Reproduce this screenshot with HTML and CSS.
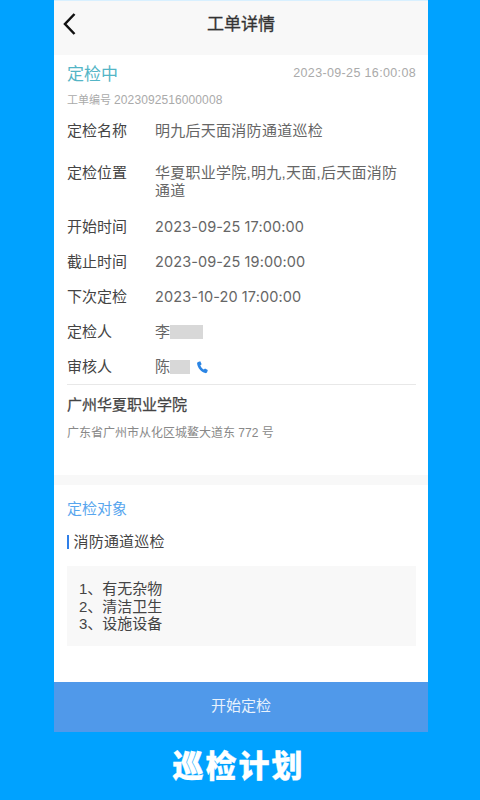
FILE: index.html
```html
<!DOCTYPE html>
<html lang="zh">
<head>
<meta charset="utf-8">
<title>工单详情</title>
<link rel="stylesheet" href="styles.css">
</head>
<body>
<div class="frame">
  <main class="phone">
    <header class="nav">
      <svg class="back" viewBox="0 0 14 22" width="14" height="22"><path d="M11.500 1 2 11l9.500 10" fill="none" stroke="#111" stroke-width="2.500"/></svg>
      <h1 class="nav-title">工单详情</h1>
    </header>
    <section class="detail">
      <div class="status-row"><span class="status">定检中</span><span class="stamp">2023-09-25 16:00:08</span></div>
      <div class="order-no">工单编号 <span class="order-digits">2023092516000008</span></div>
      <div class="rows">
        <div class="row r1"><span class="label">定检名称</span><span class="value">明九后天面消防通道巡检</span></div>
        <div class="row r2"><span class="label">定检位置</span><span class="value wrap">华夏职业学院,明九,天面,后天面消防通道</span></div>
        <div class="row r3"><span class="label">开始时间</span><span class="value date">2023-09-25 17:00:00</span></div>
        <div class="row r3"><span class="label">截止时间</span><span class="value date">2023-09-25 19:00:00</span></div>
        <div class="row r3"><span class="label">下次定检</span><span class="value date">2023-10-20 17:00:00</span></div>
        <div class="row r3"><span class="label">定检人</span><span class="value person">李<i class="mask mask-a"></i></span></div>
        <div class="row r3"><span class="label">审核人</span><span class="value person">陈<i class="mask mask-b"></i>
          <svg class="phone-icon" viewBox="0 0 14 14" width="13" height="13"><path d="M2.200 1 4.600.4l1.500 3-1.400 1.200c.5 1.900 1.900 3.700 3.700 4.600l1.300-1.100 3 1.700-.7 2.400c-.3.800-1.200 1-2 .8C5.400 11.800 1.800 7.600 1.200 3c-.1-.9.300-1.700 1-2Z" fill="#2b85e4"/></svg></span></div>
      </div>
      <div class="place">
        <div class="place-name">广州华夏职业学院</div>
        <div class="place-addr">广东省广州市从化区城鳌大道东 772 号</div>
      </div>
    </section>
    <section class="objects">
      <h2 class="obj-title">定检对象</h2>
      <h3 class="obj-name">消防通道巡检</h3>
      <div class="check-list">
        <div>1、有无杂物</div>
        <div>2、清洁卫生</div>
        <div>3、设施设备</div>
      </div>
    </section>
    <button class="start" type="button">开始定检</button>
  </main>
  <div class="caption">巡检计划</div>
</div>
</body>
</html>
```

FILE: styles.css
```css
* { box-sizing: border-box; }
html, body { margin: 0; padding: 0; }
body {
  width: 480px;
  height: 800px;
  overflow: hidden;
  background: #00a2ff;
  font-family: "Liberation Sans", "Noto Sans CJK SC", sans-serif;
}
.frame { display: flex; flex-direction: column; align-items: center; height: 800px; padding-left: 2px; }
.phone {
  width: 374px;
  height: 732px;
  background: #fff;
  display: flex;
  flex-direction: column;
}
.nav {
  height: 55px;
  flex: none;
  background: #f8f8f8;
  display: flex;
  align-items: center;
  justify-content: center;
  position: relative;
  border-top: 1px solid #d8f0ff;
  padding-bottom: 11px;
}
.back { position: absolute; left: 9px; top: 12px; }
.nav-title { margin: 0; font-family: "Noto Sans CJK SC", sans-serif; font-size: 17px; font-weight: 400; color: #333; line-height: 22px; -webkit-text-stroke: .3px #333; }
.detail { height: 420px; flex: none; padding: 0 12px 0 13px; }
.status-row { display: flex; justify-content: space-between; align-items: center; padding-top: 5px; height: 30px; }
.status { font-size: 17px; color: #54b5c6; line-height: 24px; margin-top: 4px; }
.stamp { font-size: 12.500px; color: #aaa; letter-spacing: .35px; }
.order-no { font-size: 11px; color: #aaa; line-height: 16px; margin-top: 7px; }
.order-digits { font-size: 12px; letter-spacing: .1px; }
.rows { margin-top: 13px; border-bottom: 1px solid #e8e8e8; height: 264px; }
.row { display: flex; font-size: 15px; line-height: 20px; }
.label { width: 88px; flex: none; color: #444; }
.value { color: #666; flex: 1; letter-spacing: .27px; }
.date { font-family: Inter, "Liberation Sans", sans-serif; font-size: 14.500px; letter-spacing: .1px; }
.wrap { line-height: 18px; margin-top: 1px; padding-right: 12px; }
.r1 { height: 41px; }
.r2 { height: 55px; padding-top: 1px; }
.r3 { height: 35px; }
.person { display: flex; align-items: center; height: 20px; }
.mask { display: block; background: #d8d8d8; height: 14px; }
.mask-a { width: 33px; }
.mask-b { width: 20px; }
.phone-icon { margin-left: 6px; }
.place { padding-top: 8px; }
.place-name { font-family: "Noto Sans CJK SC", sans-serif; font-size: 15px; line-height: 22px; color: #444; font-weight: 400; -webkit-text-stroke: .25px #444; }
.place-addr { font-size: 12px; line-height: 16px; margin-top: 10px; color: #888; }
.objects {
  flex: 1;
  border-top: 10px solid #f8f8f8;
  padding: 14px 12px 0 13px;
}
.obj-title { margin: 0; font-size: 15px; font-weight: 400; line-height: 20px; color: #58a6ee; }
.obj-name {
  margin: 16px 0 0;
  font-size: 15px;
  font-weight: 400;
  line-height: 20px;
  color: #444;
  padding-left: 4.500px;
  border-left: 2.500px solid #2f7fe8;
  height: 14px;
  display: flex;
  align-items: center;
  letter-spacing: .2px;
}
.check-list {
  margin: 17px 0 0;
  height: 80px;
  background: #f8f8f8;
  padding: 14px 12px;
  font-size: 15px;
  line-height: 17.500px;
  color: #444;
}
.start {
  flex: none;
  height: 50px;
  border: 0;
  padding: 0 0 5px;
  background: #5099ea;
  color: #e8f2fd;
  font: 400 15px "Noto Sans CJK SC", sans-serif;
}
.caption {
  flex: 1;
  display: flex;
  align-items: center;
  justify-content: center;
  color: #fff;
  font-size: 31px;
  font-weight: 900;
  letter-spacing: 2px;
  margin-right: 5px;
  padding-bottom: 6px;
  -webkit-text-stroke: .3px #fff;
}
```
